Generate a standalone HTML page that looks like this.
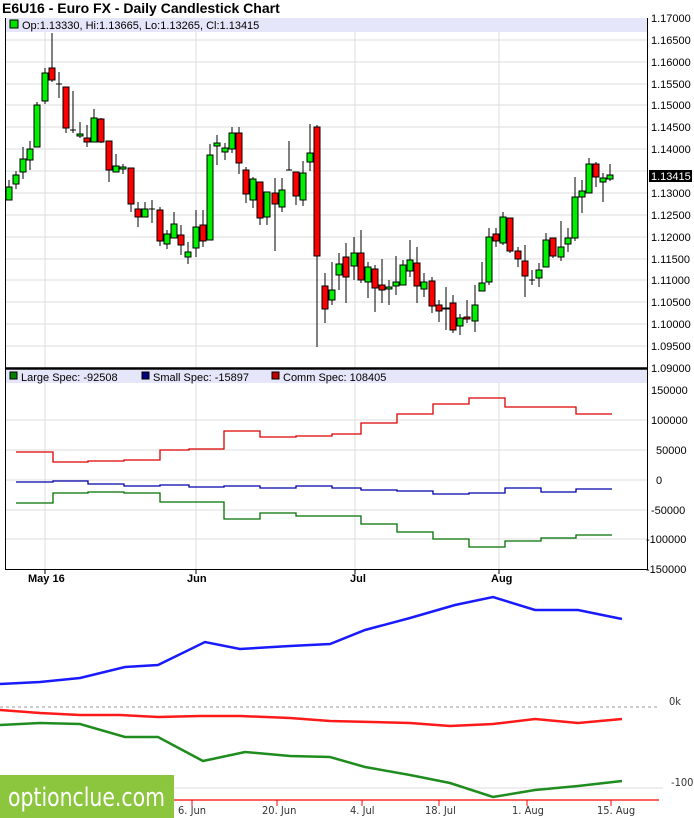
<!DOCTYPE html>
<html><head><meta charset="utf-8"><style>
body{margin:0;background:#fff;width:694px;height:818px;overflow:hidden;font-family:"Liberation Sans",sans-serif}
svg{position:absolute;left:0;top:0}
</style></head><body>
<svg width="694" height="818" viewBox="0 0 694 818" font-family="Liberation Sans, sans-serif">
<text x="2" y="13" font-size="14" font-weight="bold" fill="#000">E6U16 - Euro FX - Daily Candlestick Chart</text>
<g stroke="#dcdcdc" stroke-width="1">
<path d="M6 40H647M6 62H647M6 84H647M6 105H647M6 127H647M6 149H647M6 171H647M6 193H647M6 215H647M6 237H647M6 259H647M6 280H647M6 302H647M6 324H647M6 346H647"/>
<path d="M45 18V368M196 18V368M355 18V368M499 18V368M45 383V569M196 383V569M355 383V569M499 383V569"/>
<path d="M6 420H647M6 450H647M6 480H647M6 510H647M6 539H647"/>
</g>
<rect x="6" y="18" width="641" height="14" fill="#e6e6fa"/>
<rect x="10" y="20" width="8" height="8" fill="#00e000" stroke="#000"/>
<text x="22" y="29" font-size="11">Op:1.13330, Hi:1.13665, Lo:1.13265, Cl:1.13415</text>
<g stroke="#000" stroke-width="1">
<path d="M9 180V200M16 171V189M23 147V179M30 141V170M37 102V147M45 68V104M52 33V82M59 72V98M66 87V133M73 91V133M80 122V138M87 125V147M94 109V142M101 118V143M109 141V182M116 154V172M123 164V174M131 168V212M138 202V227M145 202V217M152 200V223M160 207V246M167 230V249M174 212V238M181 225V255M188 242V264M196 210V257M203 210V247M210 144V240M217 135V165M225 143V160M232 127V153M239 127V174M246 167V203M253 177V208M260 182V225M267 192V225M275 178V251M282 178V212M289 141V170M296 172V205M303 161V206M310 124V171M317 125V347M325 273V323M332 262V305M339 253V290M346 243V303M354 237V280M361 230V283M368 262V298M375 265V312M382 259V303M389 280V305M396 256V295M403 260V285M410 240V277M417 247V303M424 273V297M432 277V313M439 300V322M446 287V330M453 295V333M460 314V335M467 300V323M475 285V332M482 262V291M489 228V285M496 228V247M503 212V245M510 218V253M518 247V267M525 245V297M532 270V285M539 263V287M546 233V267M553 238V258M561 221V261M568 228V252M575 177V241M582 180V213M589 158V193M596 162V187M603 173V202M610 164V181"/>
<path d="M56 84H62M70 130H76M149 209H155M286 170H292M529 280H535"/>
</g>
<g stroke="#000" stroke-width="1" fill="#00ee00">
<rect x="6" y="187" width="6" height="13"/><rect x="13" y="175" width="6" height="9"/><rect x="20" y="159" width="6" height="13"/><rect x="27" y="149" width="6" height="11"/><rect x="34" y="105" width="6" height="42"/><rect x="42" y="73" width="6" height="28"/><rect x="77" y="134" width="6" height="2"/><rect x="91" y="118" width="6" height="24"/><rect x="113" y="166" width="6" height="6"/><rect x="120" y="167" width="6" height="2"/><rect x="142" y="209" width="6" height="8"/><rect x="164" y="234" width="6" height="10"/><rect x="171" y="224" width="6" height="14"/><rect x="185" y="252" width="6" height="5"/><rect x="193" y="227" width="6" height="21"/><rect x="207" y="155" width="6" height="85"/><rect x="214" y="143" width="6" height="3"/><rect x="222" y="148" width="6" height="4"/><rect x="229" y="133" width="6" height="16"/><rect x="250" y="179" width="6" height="21"/><rect x="264" y="192" width="6" height="25"/><rect x="279" y="190" width="6" height="17"/><rect x="300" y="173" width="6" height="27"/><rect x="307" y="153" width="6" height="9"/><rect x="329" y="290" width="6" height="10"/><rect x="336" y="264" width="6" height="11"/><rect x="351" y="253" width="6" height="13"/><rect x="365" y="267" width="6" height="15"/><rect x="386" y="287" width="6" height="2"/><rect x="393" y="282" width="6" height="4"/><rect x="400" y="265" width="6" height="20"/><rect x="407" y="260" width="6" height="11"/><rect x="421" y="282" width="6" height="7"/><rect x="443" y="308" width="6" height="1"/><rect x="457" y="318" width="6" height="8"/><rect x="472" y="305" width="6" height="16"/><rect x="479" y="283" width="6" height="8"/><rect x="486" y="237" width="6" height="45"/><rect x="500" y="217" width="6" height="26"/><rect x="536" y="270" width="6" height="8"/><rect x="543" y="240" width="6" height="27"/><rect x="558" y="247" width="6" height="10"/><rect x="565" y="238" width="6" height="6"/><rect x="572" y="197" width="6" height="41"/><rect x="579" y="191" width="6" height="6"/><rect x="586" y="164" width="6" height="29"/><rect x="600" y="178" width="6" height="4"/><rect x="607" y="175" width="6" height="4"/>
</g>
<g stroke="#000" stroke-width="1" fill="#ff0000">
<rect x="49" y="68" width="6" height="12"/><rect x="63" y="87" width="6" height="41"/><rect x="84" y="138" width="6" height="4"/><rect x="98" y="119" width="6" height="23"/><rect x="106" y="141" width="6" height="29"/><rect x="128" y="168" width="6" height="36"/><rect x="135" y="209" width="6" height="8"/><rect x="157" y="210" width="6" height="31"/><rect x="178" y="235" width="6" height="10"/><rect x="200" y="225" width="6" height="16"/><rect x="236" y="133" width="6" height="30"/><rect x="243" y="170" width="6" height="24"/><rect x="257" y="182" width="6" height="36"/><rect x="272" y="193" width="6" height="11"/><rect x="293" y="172" width="6" height="24"/><rect x="314" y="127" width="6" height="129"/><rect x="322" y="286" width="6" height="23"/><rect x="343" y="257" width="6" height="20"/><rect x="358" y="253" width="6" height="27"/><rect x="372" y="269" width="6" height="19"/><rect x="379" y="285" width="6" height="5"/><rect x="414" y="263" width="6" height="23"/><rect x="429" y="281" width="6" height="25"/><rect x="436" y="305" width="6" height="6"/><rect x="450" y="303" width="6" height="27"/><rect x="464" y="317" width="6" height="2"/><rect x="493" y="234" width="6" height="7"/><rect x="507" y="218" width="6" height="33"/><rect x="515" y="251" width="6" height="8"/><rect x="522" y="261" width="6" height="15"/><rect x="550" y="238" width="6" height="18"/><rect x="593" y="164" width="6" height="13"/>
</g>
<g font-size="11" fill="#000">
<text x="651" y="22">1.17000</text><text x="651" y="44">1.16500</text><text x="651" y="66">1.16000</text><text x="651" y="88">1.15500</text><text x="651" y="109">1.15000</text><text x="651" y="131">1.14500</text><text x="651" y="153">1.14000</text><text x="651" y="197">1.13000</text><text x="651" y="219">1.12500</text><text x="651" y="241">1.12000</text><text x="651" y="263">1.11500</text><text x="651" y="284">1.11000</text><text x="651" y="306">1.10500</text><text x="651" y="328">1.10000</text><text x="651" y="350">1.09500</text><text x="651" y="372">1.09000</text>
<text x="651" y="394">150000</text><text x="651" y="424">100000</text><text x="656" y="454">50000</text><text x="656" y="484">0</text><text x="651" y="514">-50000</text><text x="646" y="543">-100000</text><text x="646" y="573">-150000</text>
</g>
<rect x="649" y="170" width="43" height="12" fill="#000"/>
<text x="651" y="180" font-size="11" fill="#fff">1.13415</text>
<path d="M5.5 18V569.5H647.5V18" fill="none" stroke="#000"/>
<path d="M5 368.5H648" stroke="#000" stroke-width="2.5"/>
<g stroke="#000"><path d="M45 570V574M196 570V574M355 570V574M499 570V574"/></g>
<rect x="6" y="370" width="641" height="13" fill="#e6e6fa"/>
<rect x="10" y="372" width="7" height="7" fill="#008000" stroke="#000"/>
<text x="21" y="381" font-size="11">Large Spec: -92508</text>
<rect x="142" y="372" width="7" height="7" fill="#000080" stroke="#000"/>
<text x="153" y="381" font-size="11">Small Spec: -15897</text>
<rect x="272" y="372" width="7" height="7" fill="#c00000" stroke="#000"/>
<text x="283" y="381" font-size="11">Comm Spec: 108405</text>
<path fill="none" stroke="#dd0000" stroke-width="1.3" d="M16 452H53V462H88V461H124V460H160V450H189V449H224V431H260V437H296V436H332V434H361V423H397V414H433V404H469V398H505V407H576V414H612"/>
<path fill="none" stroke="#0000aa" stroke-width="1.3" d="M16 482H53V481H88V484H124V486H160V485H189V487H224V486H260V488H296V486H332V488H361V490H397V491H433V494H469V493H505V488H541V492H576V489H612"/>
<path fill="none" stroke="#007000" stroke-width="1.3" d="M16 503H53V493H88V492H124V493H160V502H224V519H260V513H296V516H361V524H397V532H433V539H469V547H505V541H541V538H576V535H612"/>
<g font-size="11" font-weight="bold"><text x="28" y="582">May 16</text><text x="187" y="582">Jun</text><text x="350" y="582">Jul</text><text x="491" y="582">Aug</text></g>
<path d="M0 707H659" stroke="#999" stroke-dasharray="3,3"/>
<path d="M174 788H663" stroke="#ddd"/>
<path d="M174 800H659" stroke="#f00" stroke-width="1.2"/>
<g stroke="#f00"><path d="M192 800V806M277 800V806M362 800V806M439 800V806M527 800V806M611 800V806"/></g>
<path fill="none" stroke="#1a1aff" stroke-width="2.5" d="M0 684L40 682L80 678L125 667L158 665L205 642L240 649L290 646L330 644L365 630L410 618L455 605L493 597L535 610L578 610L622 619"/>
<path fill="none" stroke="#ff1a1a" stroke-width="2.5" d="M0 710L40 713L80 715L120 715L158 717L200 716L240 716L290 718L330 721L410 723L450 726L493 724L535 719L578 723L622 719"/>
<path fill="none" stroke="#1f8c1f" stroke-width="2.5" d="M0 725L40 723L80 724L125 737L158 737L203 761L245 752L290 756L330 757L365 767L410 775L450 783L493 797L535 790L578 786L622 781"/>
<g font-size="11" fill="#333" font-family="DejaVu Sans Condensed, DejaVu Sans, sans-serif"><text x="669" y="705">0k</text><text x="671" y="786">-100k</text>
<text x="178" y="814">6. Jun</text><text x="262" y="814">20. Jun</text><text x="350" y="814">4. Jul</text><text x="425" y="814">18. Jul</text><text x="512" y="814">1. Aug</text><text x="597" y="814">15. Aug</text></g>
<rect x="0" y="775" width="174" height="43" fill="#8cc63e"/>
<text x="8" y="806" font-size="26" fill="#fff" font-family="DejaVu Sans Condensed, Liberation Sans Narrow, sans-serif" textLength="157" lengthAdjust="spacingAndGlyphs">optionclue.com</text>
</svg>
</body></html>
